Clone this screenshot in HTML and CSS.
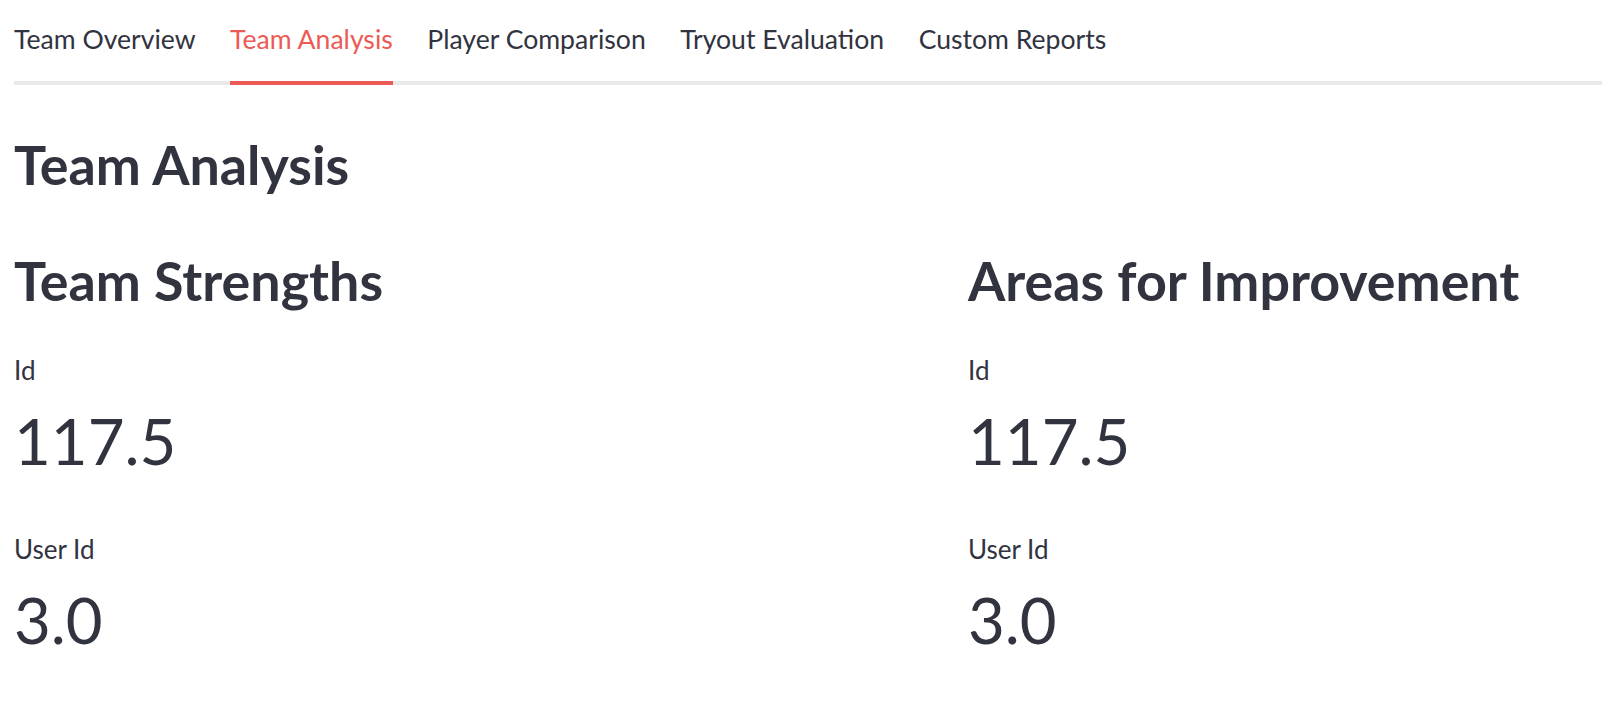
FILE: index.html
```html
<!DOCTYPE html>
<html lang="en">
<head>
<meta charset="utf-8">
<title>Team Analysis</title>
<link rel="stylesheet" href="styles.css">
</head>
<body>
<div class="page">
  <nav class="tabs">
    <div class="tab">Team Overview</div>
    <div class="tab active">Team Analysis</div>
    <div class="tab">Player Comparison</div>
    <div class="tab">Tryout Evaluation</div>
    <div class="tab">Custom Reports</div>
  </nav>
  <h2 class="title">Team Analysis</h2>
  <div class="columns">
    <section class="col">
      <h3 class="subtitle">Team Strengths</h3>
      <div class="metric">
        <div class="metric-label">Id</div>
        <div class="metric-value">117.5</div>
      </div>
      <div class="metric">
        <div class="metric-label">User Id</div>
        <div class="metric-value">3.0</div>
      </div>
    </section>
    <section class="col">
      <h3 class="subtitle">Areas for Improvement</h3>
      <div class="metric">
        <div class="metric-label">Id</div>
        <div class="metric-value">117.5</div>
      </div>
      <div class="metric">
        <div class="metric-label">User Id</div>
        <div class="metric-value">3.0</div>
      </div>
    </section>
  </div>
</div>
</body>
</html>
```

FILE: styles.css
```css
html, body {
  margin: 0;
  padding: 0;
  background: #ffffff;
  overflow: hidden;
}

body {
  font-family: Lato, "Noto Sans", "Liberation Sans", sans-serif;
  color: #31333f;
}

.page {
  width: 1877px;
  padding-left: 14px;
}

.tabs {
  display: flex;
  gap: 34.5px;
  border-bottom: 4px solid #e9e9eb;
}

.tab {
  font-size: 26.6px;
  line-height: 32px;
  padding-top: 23px;
  padding-bottom: 26px;
  margin-bottom: -4px;
  border-bottom: 4px solid transparent;
  white-space: nowrap;
}

.tab.active {
  color: #eb5a55;
  border-bottom-color: #eb5a55;
}

.title {
  margin: 47px 0 0 0;
  font-size: 53.8px;
  line-height: 64px;
  font-weight: 700;
}

.columns {
  display: grid;
  grid-template-columns: 923px 923px;
  column-gap: 31px;
  margin-top: 52px;
}

.subtitle {
  margin: 0;
  font-size: 53.8px;
  line-height: 64px;
  font-weight: 700;
}

.metric {
  margin-top: 43px;
}

.metric + .metric {
  margin-top: 55px;
}

.metric-label {
  font-size: 26px;
  line-height: 31px;
}

.metric-value {
  margin-top: 17px;
  font-size: 63.5px;
  line-height: 76px;
}
```
